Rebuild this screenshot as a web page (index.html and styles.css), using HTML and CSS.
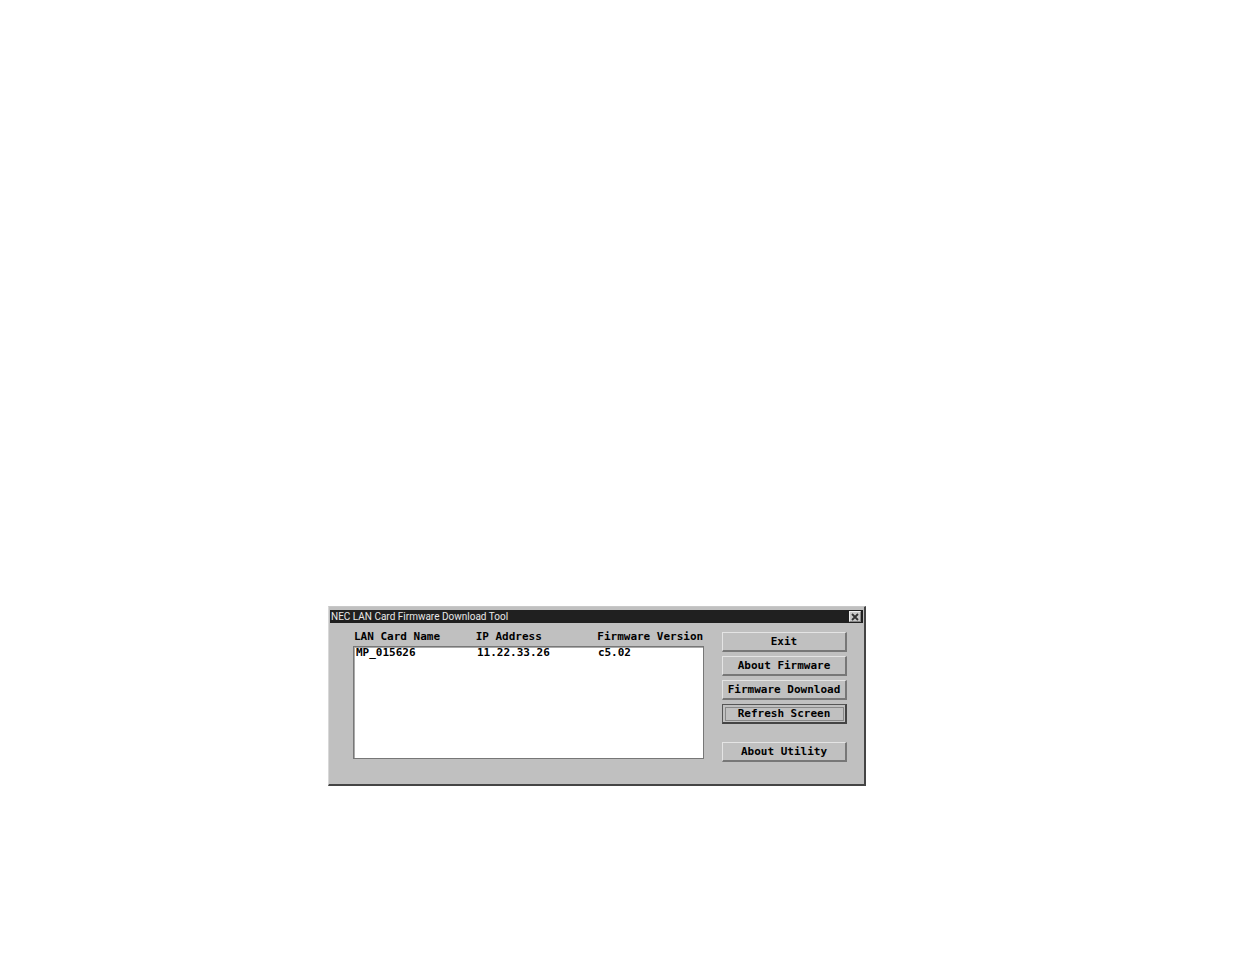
FILE: index.html
```html
<!DOCTYPE html>
<html lang="en">
<head>
<meta charset="utf-8">
<title>NEC LAN Card Firmware Download Tool</title>
<link rel="stylesheet" href="styles.css">
</head>
<body>
<main class="window">
  <header class="titlebar">
    <h1 class="title">NEC LAN Card Firmware Download Tool</h1>
    <button class="close" type="button" aria-label="Close">
      <svg viewBox="0 0 10 8" width="10" height="8" aria-hidden="true"><path d="M2 1l6 6M8 1L2 7" stroke="#333" stroke-width="1.8" fill="none"/></svg>
    </button>
  </header>
  <div class="content">
    <table class="cards">
      <thead>
        <tr><th scope="col">LAN Card Name</th><th scope="col">IP Address</th><th scope="col">Firmware Version</th></tr>
      </thead>
      <tbody>
        <tr><td>MP_015626</td><td>11.22.33.26</td><td>c5.02</td></tr>
      </tbody>
    </table>
    <nav class="actions">
      <button class="btn" type="button">Exit</button>
      <button class="btn" type="button">About Firmware</button>
      <button class="btn" type="button">Firmware Download</button>
      <button class="btn focused" type="button">Refresh Screen</button>
      <button class="btn apart" type="button">About Utility</button>
    </nav>
  </div>
</main>
</body>
</html>
```

FILE: styles.css
```css
* { box-sizing: border-box; }

body {
  margin: 0;
  min-height: 100vh;
  padding: 606px 369px 0 328px;
  background: #fff;
  color: #000;
  font: bold 11px/12px "DejaVu Sans Mono", monospace;
}

.window {
  border: 1px solid;
  border-color: #c8c8c8 #444 #444 #d8d8d8;
  border-right-width: 2px;
  border-bottom-width: 2px;
  background: #c0c0c0;
  padding: 3px 1px 22px;
}

.titlebar {
  display: flex;
  align-items: center;
  justify-content: space-between;
  height: 13px;
  padding: 0 2px 0 1px;
  background: #202020;
}

.title {
  margin: 0;
  color: #e8e8e8;
  font: 10px/13px Roboto, Arial, sans-serif;
  white-space: nowrap;
}

.close {
  display: flex;
  align-items: center;
  justify-content: center;
  width: 12px;
  height: 11px;
  padding: 0;
  border: 1px solid;
  border-color: #eee #888 #888 #eee;
  background: #c8c8c8;
}

.content {
  display: flex;
  gap: 18px;
  padding: 8px 16px 0 23px;
}

.cards {
  display: flex;
  flex: 1;
  flex-direction: column;
  height: 128px;
  min-width: 0;
}

.cards thead {
  display: block;
  height: 15px;
}

.cards tbody {
  display: block;
  flex: 1;
  border: 1px solid #777;
  box-shadow: inset 1px 1px #aaa;
  background: #fff;
  line-height: 12px;
}

.cards tr {
  display: grid;
  grid-template-columns: 35fr 35fr 31fr;
}

.cards th,
.cards td {
  padding: 0 0 0 1px;
  text-align: left;
  white-space: nowrap;
}

.cards td {
  padding-left: 2px;
}

.actions {
  display: flex;
  flex: 0 0 125px;
  flex-direction: column;
  gap: 4px;
  padding-top: 1px;
}

.btn {
  height: 20px;
  padding: 0;
  border: 1px solid;
  border-color: #e4e4e4 #777 #777 #e4e4e4;
  border-right-width: 2px;
  border-bottom-width: 2px;
  background: #c0c0c0;
  color: #000;
  font: inherit;
  white-space: nowrap;
}

.focused {
  border-color: #555 #444 #444 #555;
  outline: 1px solid #888;
  outline-offset: -4px;
}

.apart {
  margin-top: 14px;
}
```
